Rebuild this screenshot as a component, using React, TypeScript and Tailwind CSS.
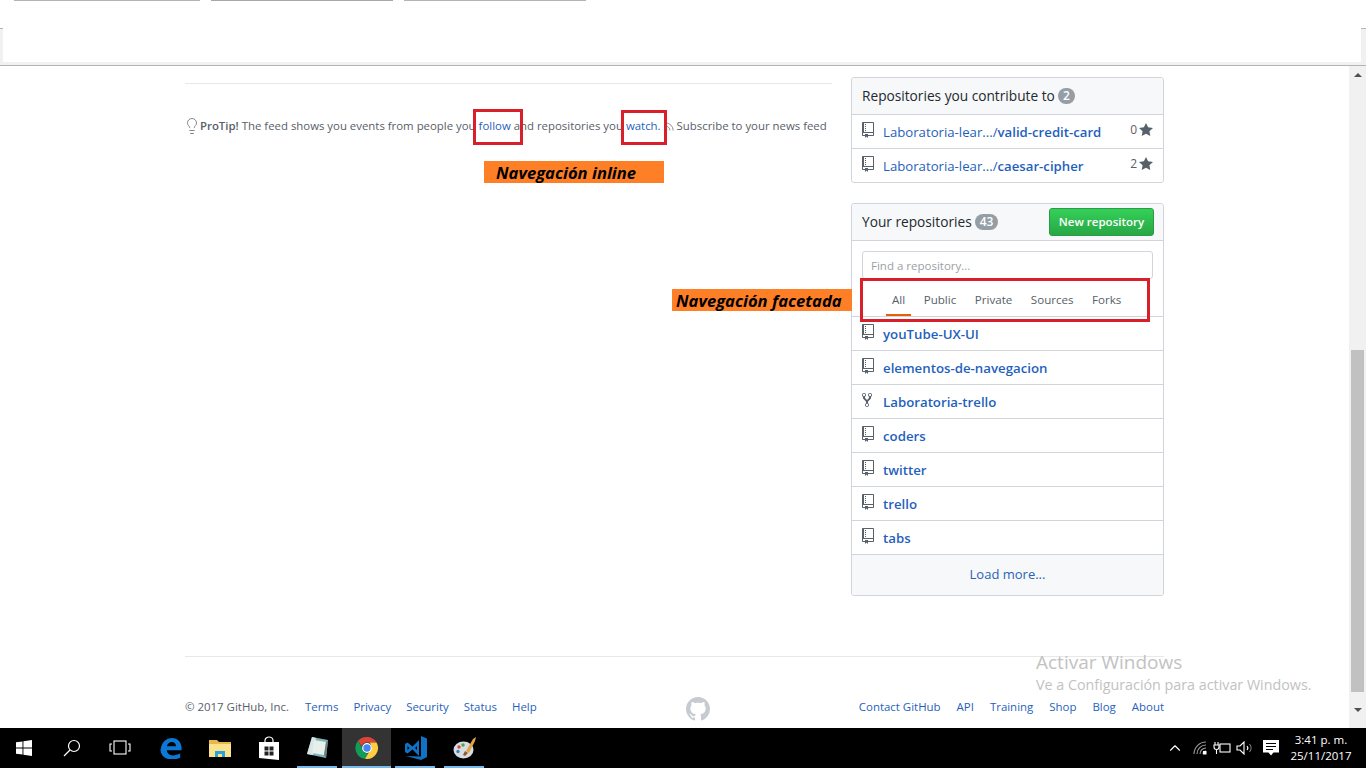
import { Lightbulb, Rss, ChevronUp } from 'lucide-react';

const repoPath =
  'M4 9H3V8h1v1zm0-3H3v1h1V6zm0-2H3v1h1V4zm0-2H3v1h1V2zm8-1v12c0 .55-.45 1-1 1H6v2l-1.5-1.5L3 16v-2H1c-.55 0-1-.45-1-1V1c0-.55.45-1 1-1h10c.55 0 1 .45 1 1zm-1 10H1v2h2v-1h3v1h5v-2zm0-10H2v9h9V1z';
const forkPath =
  'M8 1a1.993 1.993 0 0 0-1 3.72V6L5 8 3 6V4.72A1.993 1.993 0 0 0 2 1a1.993 1.993 0 0 0-1 3.72V6.5l3 3v1.78A1.993 1.993 0 0 0 5 15a1.993 1.993 0 0 0 1-3.72V9.5l3-3V4.72A1.993 1.993 0 0 0 8 1zM2 4.2C1.34 4.2.8 3.65.8 3c0-.65.55-1.2 1.2-1.2.65 0 1.2.55 1.2 1.2 0 .65-.55 1.2-1.2 1.2zm3 10c-.66 0-1.2-.55-1.2-1.2 0-.65.55-1.2 1.2-1.2.65 0 1.2.55 1.2 1.2 0 .65-.55 1.2-1.2 1.2zm3-10c-.66 0-1.2-.55-1.2-1.2 0-.65.55-1.2 1.2-1.2.65 0 1.2.55 1.2 1.2 0 .65-.55 1.2-1.2 1.2z';
const githubPath =
  'M8 0C3.58 0 0 3.58 0 8c0 3.54 2.29 6.53 5.47 7.59.4.07.55-.17.55-.38 0-.19-.01-.82-.01-1.49-2.01.37-2.53-.49-2.69-.94-.09-.23-.48-.94-.82-1.13-.28-.15-.68-.52-.01-.53.63-.01 1.08.58 1.23.82.72 1.21 1.87.87 2.33.66.07-.52.28-.87.51-1.07-1.78-.2-3.64-.89-3.64-3.95 0-.87.31-1.59.82-2.15-.08-.2-.36-1.02.08-2.12 0 0 .67-.21 2.2.82.64-.18 1.32-.27 2-.27.68 0 1.36.09 2 .27 1.53-1.04 2.2-.82 2.2-.82.44 1.1.16 1.92.08 2.12.51.56.82 1.27.82 2.15 0 3.07-1.87 3.75-3.65 3.95.29.25.54.73.54 1.48 0 1.07-.01 1.93-.01 2.2 0 .21.15.46.55.38A8.013 8.013 0 0 0 16 8c0-4.42-3.58-8-8-8z';

function RepoIcon({ fork }: { fork?: boolean }) {
  if (fork) {
    return (
      <svg viewBox="0 0 10 16" className="h-[16px] w-[10px] fill-[#586069]">
        <path d={forkPath} />
      </svg>
    );
  }
  return (
    <svg viewBox="0 0 12 16" className="h-[16px] w-[12px] fill-[#586069]">
      <path d={repoPath} />
    </svg>
  );
}

function Star() {
  return (
    <svg viewBox="0 0 14 16" className="h-[16px] w-[14px] fill-[#586069]">
      <path d="M14 6l-4.9-.64L7 1 4.9 5.36 0 6l3.6 3.26L2.67 14 7 11.67 11.33 14l-.93-4.74L14 6z" />
    </svg>
  );
}

function Count({ children }: { children: React.ReactNode }) {
  return (
    <span className="ml-[3px] min-w-[17px] rounded-full bg-[#959da5] px-[5px] text-center text-[12px] font-semibold leading-[16px] text-white">
      {children}
    </span>
  );
}

function ContributeRow({ owner, repo, stars }: { owner: string; repo: string; stars: number }) {
  return (
    <div className="flex h-[34px] items-center border-t border-[#d1d5da] pl-[10px] pr-[10px]">
      <div className="-mt-[3px] flex w-[21px]">
        <RepoIcon />
      </div>
      <a className="pt-[2px] text-[13.2px] text-[#1f5fbd]">
        {owner}/<span className="font-semibold">{repo}</span>
      </a>
      <span className="-mt-[3px] ml-auto mr-[2px] text-[12px] text-[#586069]">{stars}</span>
      <div className="-mt-[3px] flex">
        <Star />
      </div>
    </div>
  );
}

function YourRepoRow({ name, fork }: { name: string; fork?: boolean }) {
  return (
    <div className="flex h-[34px] items-center border-t border-[#d1d5da] pl-[10px]">
      <div className="-mt-[3px] flex w-[21px]">
        <RepoIcon fork={fork} />
      </div>
      <a className="pt-[2px] text-[13.25px] font-semibold text-[#1f5fbd]">{name}</a>
    </div>
  );
}

function Card({ children, className }: { children: React.ReactNode; className?: string }) {
  return <div className={`rounded-[3px] border border-[#d1d5da] ${className ?? ''}`}>{children}</div>;
}

function FooterLinks({ items, className }: { items: string[]; className: string }) {
  return (
    <div className={`flex ${className}`}>
      {items.map((item) => (
        <a key={item} className="text-[11.45px] leading-[18px] text-[#1f5fbd]">
          {item}
        </a>
      ))}
    </div>
  );
}

function TaskCell({
  children,
  active,
  running,
  wide,
}: {
  children: React.ReactNode;
  active?: boolean;
  running?: boolean;
  wide?: boolean;
}) {
  return (
    <div className={`relative flex h-full items-center justify-center ${wide ? 'w-[48px]' : 'w-[49px]'} ${active ? 'bg-[#333333]' : ''}`}>
      {children}
      {running ? (
        <span className={`absolute bottom-0 h-[2px] bg-[#76b9ed] ${active ? 'inset-x-0' : 'left-[4px] right-[5px]'}`} />
      ) : null}
    </div>
  );
}

function TaskbarIcons() {
  return (
    <div className="flex h-full">
      <TaskCell wide>
        <svg viewBox="0 0 16 16" className="h-[16px] w-[16px] fill-white">
          <path d="M0 2.3 6.5 1.4V7.6H0zM7.4 1.3 16 0V7.6H7.4zM0 8.4H6.5V14.6L0 13.7zM7.4 8.4H16V16L7.4 14.7z" />
        </svg>
      </TaskCell>
      <TaskCell wide>
        <svg viewBox="0 0 18 18" className="h-[18px] w-[18px] fill-none stroke-white stroke-[1.2]">
          <circle cx="11" cy="7" r="5.5" />
          <path d="M7 11 1 17" />
        </svg>
      </TaskCell>
      <TaskCell wide>
        <svg viewBox="0 0 22 16" className="h-[16px] w-[22px] fill-none stroke-white stroke-[1.1]">
          <rect x="5" y="1" width="12" height="13" />
          <path d="M3 4H1V11H3M19 4H21V11H19" />
        </svg>
      </TaskCell>
      <div className="w-[2px]" />
      <TaskCell>
        <svg viewBox="0 0 24 24" className="h-[22px] w-[22px]">
          <path
            fill="#0b78d7"
            d="M1 13C1.5 5.5 7 1 13 1c6.5 0 10.5 5 10.5 11v2.5H7.5c.3 3.7 3.2 5.6 6.5 5.6 3 0 5.5-.8 8-2.3v4.7c-2.5 1.3-5.5 2-9 2-7 0-12.5-4-12.5-11.5zM7.6 10.2h9.9c0-2.8-1.8-4.8-4.6-4.8-2.8 0-4.8 1.900-5.300 4.800z"
          />
        </svg>
      </TaskCell>
      <TaskCell>
        <svg viewBox="0 0 22 18" className="h-[18px] w-[22px]">
          <path fill="#e6b94d" d="M0 1h8l2 2h12v15H0z" />
          <path fill="#fbe38e" d="M0 5h22v13H0z" />
          <path fill="#29a3d8" d="M6 18v-6h10v6h-3v-3H9v3z" />
        </svg>
      </TaskCell>
      <TaskCell>
        <svg viewBox="0 0 20 24" className="h-[24px] w-[20px]">
          <path fill="none" stroke="#fff" strokeWidth="1.2" d="M6 7V4.5C6 2.5 8 1 10 1s4 1.5 4 3.5V7" />
          <path fill="#fff" d="M0 6h20v18L0 22z" />
          <path fill="#222" d="M5.5 10.5h4v4h-4zM10.5 10.5h4v4h-4zM5.5 15.500h4v4h-4zM10.500 15.500h4v4h-4z" />
        </svg>
      </TaskCell>
      <TaskCell running>
        <svg viewBox="0 0 24 24" className="h-[24px] w-[24px]">
          <path fill="#7fb4b8" d="M6 1 22 4 20 22 1 18z" />
          <path fill="#d9e6e8" d="M6 1 10 2 7 19 1 18z" />
          <path fill="#e6efe9" d="M8 4 20 6 18 19 6 17z" />
          <path fill="#6d7f80" d="M20 6 22 4 20 22 18 19z" />
        </svg>
      </TaskCell>
      <TaskCell active running>
        <svg viewBox="0 0 24 24" className="h-[24px] w-[24px]">
          <path fill="#db4437" d="M12 1a11 11 0 0 1 9.53 5.5H12a5.5 5.5 0 0 0-5.3 4L3 4.8A11 11 0 0 1 12 1z" />
          <path fill="#0f9d58" d="M3 4.8l4 6.9a5.5 5.5 0 0 0 6.5 5.6l-3.4 5.5A11 11 0 0 1 3 4.800z" />
          <path fill="#ffcd40" d="M21.53 6.5A11 11 0 0 1 10.1 22.8l4.8-8.3a5.5 5.5 0 0 0-.4-7.900z" />
          <circle cx="12" cy="12" r="4.3" fill="#4285f4" stroke="#fff" strokeWidth="1.2" />
        </svg>
      </TaskCell>
      <TaskCell running>
        <svg viewBox="0 0 24 24" className="h-[24px] w-[24px]">
          <path
            fill="#0f72c4"
            fillRule="evenodd"
            d="M1 8 3.5 6.5 8.5 10.5 15 4V20L8.5 13.5 3.5 17.5 1 16zM3.5 10V14L5.5 12zM11 12 13 14V10z"
          />
          <path fill="#0f72c4" d="M17 0 23 2.5V21L17 24 2 20 17 20.5z" />
        </svg>
      </TaskCell>
      <TaskCell running>
        <svg viewBox="0 0 24 24" className="h-[24px] w-[24px]">
          <ellipse cx="10.5" cy="14" rx="10" ry="8.5" fill="#d8dde2" />
          <circle cx="6" cy="11" r="1.7" fill="#d24a3c" />
          <circle cx="10" cy="9" r="1.7" fill="#4aa654" />
          <circle cx="5" cy="15.5" r="1.7" fill="#3f7fcb" />
          <path fill="#e2a24a" d="M13 15 20 3l3-2-1 4-6 12z" />
          <path fill="#8b5b2c" d="M12 15l3 2-3 3-2-1z" />
        </svg>
      </TaskCell>
    </div>
  );
}

function Tray() {
  return (
    <div className="ml-auto flex h-full items-center text-white">
      <ChevronUp size={18} strokeWidth={1.5} className="mr-[9px]" />
      <svg viewBox="0 0 14 14" className="mr-[6px] h-[14px] w-[14px] fill-none stroke-[#9a9a9a] stroke-[1.1]">
        <path d="M1 13A12 12 0 0 1 13 1M4 13A9 9 0 0 1 13 4M7 13a6 6 0 0 1 6-6M10 13a3 3 0 0 1 3-3" />
        <rect x="10" y="10" width="3.5" height="3.5" fill="#fff" stroke="none" />
      </svg>
      <svg viewBox="0 0 18 14" className="mr-[5px] h-[14px] w-[18px] fill-none stroke-white stroke-[1.1]">
        <rect x="7" y="3" width="10" height="8" />
        <path d="M2 1v3M5 1v3M1 4h5v2a2.5 2.5 0 0 1-5 0zM3.5 8.5V13" />
      </svg>
      <svg viewBox="0 0 18 14" className="mr-[9px] h-[14px] w-[18px] fill-none stroke-white stroke-[1.1]">
        <path d="M1 5h3l4-4v12L4 9H1z" />
        <path d="M11 5a3 3 0 0 1 0 4" />
        <path stroke="#888888" d="M13.5 3a6 6 0 0 1 0 8" />
      </svg>
      <svg viewBox="0 0 16 16" className="mr-[5px] h-[16px] w-[16px]">
        <path fill="#fff" d="M0 0h16v12.5H10.5L8 15.5 5.5 12.5H0z" />
        <path stroke="#000" strokeWidth="1" d="M3 3.5h10M3 6.5h10M3 9.5h7" />
      </svg>
      <div className="mr-[8px] flex w-[74px] flex-col items-center text-[11.5px] leading-[16px] font-['Open_Sans',sans-serif]">
        <span>3:41 p. m.</span>
        <span>25/11/2017</span>
      </div>
    </div>
  );
}

export default function App() {
  return (
    <div className="relative flex h-[768px] w-[1366px] flex-col overflow-hidden bg-white font-['Open_Sans','Noto_Sans',sans-serif] text-[#24292e]">
      {/* window chrome leftovers above the page */}
      <div className="h-[66px] shrink-0 border-b border-[#b4b4b4] bg-white">
        <div className="flex gap-[11px] pl-[14px]">
          <div className="h-px w-[186px] bg-[#b4b4b4]" />
          <div className="h-px w-[182px] bg-[#a8a8a8]" />
          <div className="h-px w-[182px] bg-[#b4b4b4]" />
        </div>
        <div className="mt-[27px] h-[37px] border-t border-[#b4b4b4] bg-[#f1f1f1] pb-[3px] pl-[3px] pr-[5px]">
          <div className="-mt-px h-[calc(100%+1px)] bg-white" />
        </div>
      </div>

      <div className="flex min-h-0 flex-1">
        <div className="min-w-0 flex-1 pl-[185px]">
          <div className="flex w-[979px] gap-[19px]">
            <div className="w-[647px] pt-[17px]">
              <div className="border-t border-[#e8e8e8]" />
              <p className="mt-[32px] flex items-center whitespace-nowrap text-[11.4px] leading-[20px] text-[#586069]">
                <Lightbulb size={18} strokeWidth={1} className="-ml-[2px] mr-[-1px]" />
                <span className="font-semibold">ProTip!</span>
                <span className="ml-[3px]">The feed shows you events from people you</span>
                <a className="ml-[3px] text-[#1f5fbd]">follow</a>
                <span className="ml-[3px]">and repositories you</span>
                <a className="ml-[3px] text-[#1f5fbd]">watch.</a>
                <Rss size={11} strokeWidth={1.5} className="ml-[3px] mr-[2px]" />
                <span>Subscribe to your news feed</span>
              </p>
            </div>

            <div className="w-[313px] pt-[11px]">
              <Card>
                <div className="flex h-[36px] items-center rounded-t-[3px] bg-[#f6f8fa] pl-[10px] text-[13.7px] font-medium">
                  Repositories you contribute to
                  <Count>2</Count>
                </div>
                <ContributeRow owner="Laboratoria-lear..." repo="valid-credit-card" stars={0} />
                <ContributeRow owner="Laboratoria-lear..." repo="caesar-cipher" stars={2} />
              </Card>

              <Card className="mt-[20px]">
                <div className="flex h-[36px] items-center rounded-t-[3px] bg-[#f6f8fa] pl-[10px] pr-[9px] text-[13.7px] font-medium">
                  Your repositories
                  <Count>43</Count>
                  <button className="ml-auto h-[28px] w-[105px] rounded-[3px] border border-[#2a9a47] bg-gradient-to-b from-[#34d058] to-[#28a745] text-[11.5px] font-semibold text-white">
                    New repository
                  </button>
                </div>
                <div className="border-t border-[#d1d5da] bg-white px-[10px] pt-[10px]">
                  <div className="flex h-[28px] items-center rounded-[3px] border border-[#d1d5da] px-[8px] pt-[2px] text-[11.5px] text-[#9a9fa5]">
                    Find a repository...
                  </div>
                  <div className="flex h-[37px] gap-[18.5px] pl-[30px] text-[11.6px] text-[#586069]">
                    {['All', 'Public', 'Private', 'Sources', 'Forks'].map((tab, i) => (
                      <div key={tab} className="relative flex items-center pt-[5px]">
                        {tab}
                        {i === 0 ? (
                          <span className="absolute -inset-x-[6px] bottom-0 h-[2px] bg-[#e36209]" />
                        ) : null}
                      </div>
                    ))}
                  </div>
                </div>
                <YourRepoRow name="youTube-UX-UI" />
                <YourRepoRow name="elementos-de-navegacion" />
                <YourRepoRow name="Laboratoria-trello" fork />
                <YourRepoRow name="coders" />
                <YourRepoRow name="twitter" />
                <YourRepoRow name="trello" />
                <YourRepoRow name="tabs" />
                <div className="flex h-[41px] items-center justify-center rounded-b-[3px] border-t border-[#d1d5da] bg-[#f6f8fa] text-[13px] text-[#2a62b8]">
                  Load more...
                </div>
              </Card>
            </div>
          </div>

          <footer className="mt-[60px] flex w-[979px] justify-between border-t border-[#e8e8e8] pt-[41px]">
            <div className="flex gap-[16px] text-[11.45px] leading-[18px] text-[#586069]">
              <span>© 2017 GitHub, Inc.</span>
              <FooterLinks className="gap-[15px]" items={['Terms', 'Privacy', 'Security', 'Status', 'Help']} />
            </div>
            <svg viewBox="0 0 16 16" className="-mt-px h-[24px] w-[24px] fill-[#c6cbd1]">
              <path d={githubPath} />
            </svg>
            <FooterLinks className="gap-[16px]" items={['Contact GitHub', 'API', 'Training', 'Shop', 'Blog', 'About']} />
          </footer>
        </div>

        {/* scrollbar */}
        <div className="flex w-[17px] shrink-0 flex-col bg-[#f1f1f1]">
          <div className="flex h-[17px] items-center justify-center">
            <div className="h-0 w-0 border-x-[4px] border-b-[4px] border-x-transparent border-b-[#505050]" />
          </div>
          <div className="mx-[2px] mt-[267px] h-[342px] bg-[#c1c1c1]" />
          <div className="flex flex-1 items-center justify-center">
            <div className="h-0 w-0 border-x-[4px] border-t-[4px] border-x-transparent border-t-[#505050]" />
          </div>
        </div>
      </div>

      <div className="flex h-[40px] shrink-0 bg-black">
        <TaskbarIcons />
        <Tray />
      </div>

      {/* annotations drawn over the screenshot */}
      <div className="absolute left-[473px] top-[109px] h-[36px] w-[50px] border-[3px] border-[#d81f2a]" />
      <div className="absolute left-[621px] top-[110px] h-[35px] w-[46px] border-[3px] border-[#d81f2a]" />
      <div className="absolute left-[860px] top-[278px] h-[44px] w-[290px] border-[3px] border-[#d81f2a]" />
      <div className="absolute left-[484px] top-[161px] flex h-[22px] w-[180px] items-center bg-[#ff7f27] pl-[12px] pt-[2px] text-[16.6px] font-bold italic text-black">
        Navegación inline
      </div>
      <div className="absolute left-[672px] top-[289px] flex h-[22px] w-[180px] items-center bg-[#ff7f27] pl-[4px] pt-[2px] text-[16.6px] font-bold italic text-black">
        Navegación facetada
      </div>
      <div className="absolute left-[1036px] top-[649px] text-[19px] leading-[26px] text-[#c2c2c2]">Activar Windows</div>
      <div className="absolute left-[1036px] top-[675px] text-[14.3px] leading-[20px] text-[#c2c2c2]">
        Ve a Configuración para activar Windows.
      </div>
    </div>
  );
}
